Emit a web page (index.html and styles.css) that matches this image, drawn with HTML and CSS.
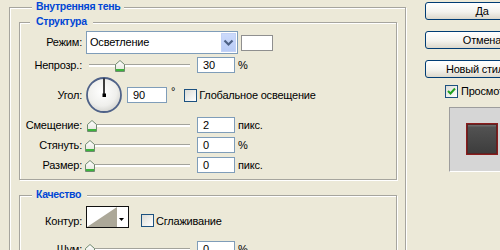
FILE: index.html
```html
<!DOCTYPE html>
<html>
<head>
<meta charset="utf-8">
<link rel="stylesheet" href="styles.css">
</head>
<body>
<div class="dialog">
  <div class="group outer">
    <div class="legend legend-outer">Внутренняя тень</div>
    <div class="group struct">
      <div class="legend legend-struct">Структура</div>

      <div class="row r-mode">
        <span class="lbl">Режим:</span>
        <div class="select">
          <span class="sel-text">Осветление</span>
          <span class="dd"><svg width="15" height="19" viewBox="0 0 15 19"><polyline points="3.5,7.5 7.5,11.5 11.5,7.5" fill="none" stroke="#4D6185" stroke-width="2.2"/></svg></span>
        </div>
        <span class="swatch"></span>
      </div>

      <div class="row r-field r-first">
        <span class="lbl">Непрозр.:</span>
        <div class="slider"><span class="track"></span><span class="thumb" style="left:29px"><svg width="10" height="12" viewBox="0 0 10 12"><defs><linearGradient id="tg1" x1="0" y1="0" x2="0" y2="1"><stop offset="0" stop-color="#ffffff"/><stop offset="1" stop-color="#e2e2da"/></linearGradient></defs><polygon points="0.5,4.5 5,0.5 9.5,4.5 9.5,11.5 0.5,11.5" fill="url(#tg1)" stroke="#6f8a6f"/><rect x="1" y="9" width="8" height="2" fill="#3cb43c"/></svg></span></div>
        <span class="input">30</span><span class="unit">%</span>
      </div>

      <div class="row r-angle">
        <span class="lbl">Угол:</span>
        <svg class="dial" width="36" height="36" viewBox="0 0 36 36"><defs><radialGradient id="dg" cx="0.45" cy="0.4" r="0.6"><stop offset="0" stop-color="#ffffff"/><stop offset="0.7" stop-color="#efefec"/><stop offset="1" stop-color="#d6d6d2"/></radialGradient></defs><circle cx="18" cy="18" r="17" fill="url(#dg)" stroke="#4f6288" stroke-width="1.8"/><line x1="18" y1="1.5" x2="18" y2="18" stroke="#000" stroke-width="1.5"/><rect x="16.5" y="16.5" width="3.5" height="3.5" fill="#000"/></svg>
        <span class="input input-angle">90</span><span class="deg">°</span>
        <span class="check"></span><span class="check-lbl">Глобальное освещение</span>
      </div>

      <div class="row r-field">
        <span class="lbl">Смещение:</span>
        <div class="slider"><span class="track"></span><span class="thumb" style="left:1px"><svg width="10" height="12" viewBox="0 0 10 12"><defs><linearGradient id="tg2" x1="0" y1="0" x2="0" y2="1"><stop offset="0" stop-color="#ffffff"/><stop offset="1" stop-color="#e2e2da"/></linearGradient></defs><polygon points="0.5,4.5 5,0.5 9.5,4.5 9.5,11.5 0.5,11.5" fill="url(#tg2)" stroke="#6f8a6f"/><rect x="1" y="9" width="8" height="2" fill="#3cb43c"/></svg></span></div>
        <span class="input">2</span><span class="unit">пикс.</span>
      </div>

      <div class="row r-field">
        <span class="lbl">Стянуть:</span>
        <div class="slider"><span class="track"></span><span class="thumb" style="left:-1px"><svg width="10" height="12" viewBox="0 0 10 12"><defs><linearGradient id="tg3" x1="0" y1="0" x2="0" y2="1"><stop offset="0" stop-color="#ffffff"/><stop offset="1" stop-color="#e2e2da"/></linearGradient></defs><polygon points="0.5,4.5 5,0.5 9.5,4.5 9.5,11.5 0.5,11.5" fill="url(#tg3)" stroke="#6f8a6f"/><rect x="1" y="9" width="8" height="2" fill="#3cb43c"/></svg></span></div>
        <span class="input">0</span><span class="unit">%</span>
      </div>

      <div class="row r-field">
        <span class="lbl">Размер:</span>
        <div class="slider"><span class="track"></span><span class="thumb" style="left:-1px"><svg width="10" height="12" viewBox="0 0 10 12"><defs><linearGradient id="tg4" x1="0" y1="0" x2="0" y2="1"><stop offset="0" stop-color="#ffffff"/><stop offset="1" stop-color="#e2e2da"/></linearGradient></defs><polygon points="0.5,4.5 5,0.5 9.5,4.5 9.5,11.5 0.5,11.5" fill="url(#tg4)" stroke="#6f8a6f"/><rect x="1" y="9" width="8" height="2" fill="#3cb43c"/></svg></span></div>
        <span class="input">0</span><span class="unit">пикс.</span>
      </div>
    </div>

    <div class="group quality">
      <div class="legend legend-quality">Качество</div>
      <div class="row r-contour">
        <span class="lbl">Контур:</span>
        <span class="contour"><svg width="41" height="20" viewBox="0 0 41 20"><rect width="41" height="20" fill="#fff"/><polygon points="0,20 30,0 30,20" fill="#aca899"/><polygon points="32,11 37,11 34.5,14" fill="#000"/></svg></span>
        <span class="check check-smooth"></span><span class="check-lbl">Сглаживание</span>
      </div>
      <div class="row r-field r-noise">
        <span class="lbl">Шум:</span>
        <div class="slider"><span class="track"></span><span class="thumb" style="left:-1px"><svg width="10" height="12" viewBox="0 0 10 12"><defs><linearGradient id="tg5" x1="0" y1="0" x2="0" y2="1"><stop offset="0" stop-color="#ffffff"/><stop offset="1" stop-color="#e2e2da"/></linearGradient></defs><polygon points="0.5,4.5 5,0.5 9.5,4.5 9.5,11.5 0.5,11.5" fill="url(#tg5)" stroke="#6f8a6f"/><rect x="1" y="9" width="8" height="2" fill="#3cb43c"/></svg></span></div>
        <span class="input">0</span><span class="unit">%</span>
      </div>
    </div>
  </div>

  <div class="side">
    <div class="btn">Да</div>
    <div class="btn">Отмена</div>
    <div class="btn">Новый стиль...</div>
    <div class="preview-row">
      <span class="check checked"><svg width="11" height="11" viewBox="0 0 11 11"><polyline points="2,5 4.5,7.5 9,2.5" fill="none" stroke="#21a121" stroke-width="2"/></svg></span><span class="check-lbl">Просмотр</span>
    </div>
    <div class="preview">
      <div class="pv-swatch"></div>
    </div>
  </div>
</div>
</body>
</html>
```
FILE: styles.css
```css
html, body {
  margin: 0;
  padding: 0;
  overflow: hidden;
}
body {
  width: 500px;
  height: 250px;
  background: #ECE9D8;
  font-family: "Liberation Sans", Arial, sans-serif;
  font-size: 11px;
  line-height: 13px;
  letter-spacing: -0.2px;
  color: #000;
}
.dialog {
  display: flex;
  align-items: flex-start;
  width: 600px;
  padding-left: 9px;
}
.group {
  border: 1px solid #a6a59e;
  box-shadow: inset 1px 1px 0 #fff, 1px 1px 0 #fff;
}
.outer {
  flex: 0 0 auto;
  width: 378px;
  margin-top: 7px;
  padding: 0 8px 40px 9px;
}
.legend {
  width: fit-content;
  height: 13px;
  margin-top: -8px;
  margin-bottom: -5px;
  background: #ECE9D8;
  color: #0046D5;
  font-weight: bold;
  font-size: 10.5px;
  letter-spacing: -0.3px;
  white-space: nowrap;
}
.legend-outer { margin-left: 13px; padding: 0 4px; }
.legend-struct { margin-left: 10px; padding: 0 6px; }
.legend-quality { margin-left: 12px; padding: 0 6px 0 4px; }
.struct {
  margin-top: 14px;
  padding-bottom: 6px;
}
.quality {
  margin-top: 15px;
  padding-bottom: 30px;
}
.row {
  display: flex;
  align-items: center;
}
.lbl {
  flex: none;
  width: 62px;
  margin-right: 4px;
  text-align: right;
  white-space: nowrap;
}
.r-mode { margin-top: 8px; height: 23px; }
.r-first { margin-top: 3px !important; }
.r-field { margin-top: 4px; height: 16px; }
.r-angle { margin-top: 4px; height: 36px; }
.select {
  box-sizing: border-box;
  width: 152px;
  height: 23px;
  border: 1px solid #7F9DB9;
  background: #fff;
  display: flex;
  align-items: center;
  justify-content: space-between;
}
.sel-text { padding-left: 3px; }
.dd {
  display: block;
  width: 15px;
  height: 19px;
  margin-right: 1px;
  background: linear-gradient(#cddbfc, #b8cbf6);
  box-shadow: inset 0 0 0 1px #c3d2f5;
}
.dd svg { display: block; }
.swatch {
  box-sizing: border-box;
  width: 32px;
  height: 16px;
  margin-left: 3px;
  border: 1px solid #8f8f8f;
  background: #fff;
}
.slider {
  position: relative;
  flex: none;
  width: 104px;
  height: 16px;
  margin-right: 7px;
}
.track {
  position: absolute;
  left: 3px;
  right: 0;
  top: 7px;
  height: 2px;
  border-top: 1px solid #a3a39b;
  background: #fff;
}
.thumb {
  position: absolute;
  top: 3px;
  width: 10px;
  height: 12px;
}
.thumb svg { display: block; }
.input {
  box-sizing: border-box;
  flex: none;
  width: 38px;
  height: 16px;
  padding-left: 5px;
  border: 1px solid #7F9DB9;
  background: #fff;
  line-height: 14px;
  letter-spacing: 0;
}
.unit { margin-left: 3px; }
.dial { flex: none; display: block; }
.input-angle { width: 40px; margin-left: 5px; }
.deg {
  align-self: flex-start;
  margin-top: 8px;
  margin-left: 4px;
}
.check {
  box-sizing: border-box;
  flex: none;
  width: 13px;
  height: 13px;
  border: 1px solid #1C5180;
  background: linear-gradient(135deg, #dcdcd6, #ffffff);
  margin-left: 9px;
}
.check-lbl { margin-left: 2px; white-space: nowrap; }
.r-contour {
  margin-top: 10px;
  height: 22px;
  align-items: flex-end;
}
.contour {
  box-sizing: border-box;
  flex: none;
  width: 43px;
  height: 22px;
  border: 1px solid #111;
  background: #fff;
}
.contour svg { display: block; }
.check-smooth { margin-left: 12px; margin-bottom: 1px; }
.r-noise { margin-top: 13px; }
.side {
  flex: 0 0 114px;
  margin-left: 19px;
  margin-top: 2px;
  width: 114px;
}
.btn {
  box-sizing: border-box;
  width: 114px;
  height: 18px;
  margin-bottom: 11px;
  border: 1px solid #003C74;
  border-radius: 3px;
  background: linear-gradient(#ffffff, #f4f3ee 55%, #dcd8cc);
  text-align: center;
  line-height: 16px;
  white-space: nowrap;
}
.preview-row {
  display: flex;
  align-items: center;
  margin-top: -4px;
  margin-left: 20px;
  height: 13px;
}
.preview-row .check { margin-left: 0; }
.preview-row .check-lbl { margin-left: 3px; }
.checked svg { display: block; }
.preview {
  box-sizing: border-box;
  width: 80px;
  height: 65px;
  margin-top: 9px;
  margin-left: 24px;
  padding: 15px 0 0 16px;
  border-left: 1px solid #9d9d9d;
  border-top: 1px solid #9d9d9d;
  border-bottom: 1px solid #fff;
  background: #d6d6d6;
}
.pv-swatch {
  box-sizing: border-box;
  width: 32px;
  height: 32px;
  border: 1px solid #8a1c1c;
  box-shadow: inset 0 0 0 1px #5a2424;
  background: linear-gradient(#6a6a6a 0, #6a6a6a 2px, #525252 3px, #3c3c3c);
}
```
